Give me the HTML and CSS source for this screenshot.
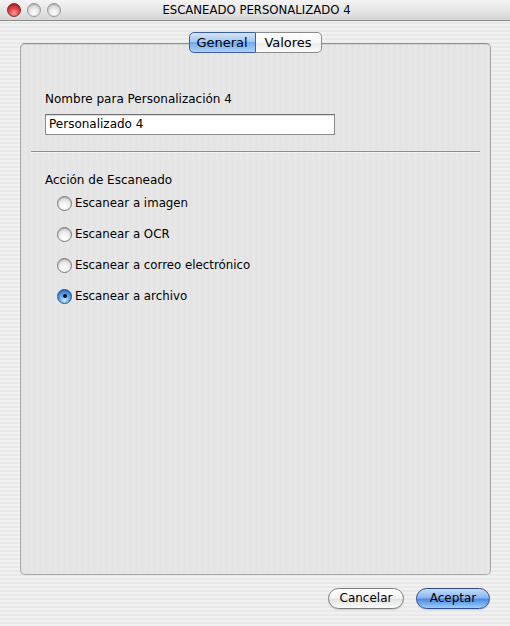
FILE: index.html
```html
<!DOCTYPE html>
<html lang="es">
<head>
<meta charset="utf-8">
<title>ESCANEADO PERSONALIZADO 4</title>
<link rel="stylesheet" href="styles.css">
</head>
<body>
<div class="window">
  <div class="titlebar">
    <div class="lights">
      <span class="light close"></span>
      <span class="light"></span>
      <span class="light"></span>
    </div>
    <div class="title">ESCANEADO PERSONALIZADO 4</div>
  </div>
  <div class="content">
    <div class="tabs">
      <span class="tab active">General</span>
      <span class="tab">Valores</span>
    </div>
    <div class="panel">
      <div class="field-label">Nombre para Personalización 4</div>
      <div class="textfield">Personalizado 4</div>
      <div class="separator"></div>
      <div class="group-label">Acción de Escaneado</div>
      <div class="radios">
        <div class="radio-row"><span class="radio"></span><span>Escanear a imagen</span></div>
        <div class="radio-row"><span class="radio"></span><span>Escanear a OCR</span></div>
        <div class="radio-row"><span class="radio"></span><span>Escanear a correo electrónico</span></div>
        <div class="radio-row"><span class="radio checked"></span><span>Escanear a archivo</span></div>
      </div>
    </div>
    <div class="buttons">
      <span class="btn">Cancelar</span>
      <span class="btn default">Aceptar</span>
    </div>
  </div>
</div>
</body>
</html>
```
FILE: styles.css
```css
html, body {
  margin: 0;
  padding: 0;
}
body {
  width: 510px;
  height: 626px;
  overflow: hidden;
  font-family: "DejaVu Sans", "Liberation Sans", sans-serif;
  font-size: 12px;
  color: #000;
}
.window {
  width: 510px;
  height: 626px;
  background: repeating-linear-gradient(to bottom, #f1f1f1 0 2px, #e9e9e9 2px 4px);
  display: flex;
  flex-direction: column;
}
.titlebar {
  height: 21px;
  box-sizing: border-box;
  border-bottom: 1px solid #8a8a8a;
  background: linear-gradient(to bottom, #f4f4f4 0%, #e6e6e6 50%, #d6d6d6 100%);
  display: flex;
  align-items: center;
}
.lights {
  display: flex;
  gap: 6px;
  padding-left: 7px;
}
.light {
  width: 14px;
  height: 14px;
  box-sizing: border-box;
  border-radius: 50%;
  border: 1px solid #9a9a9a;
  background: radial-gradient(circle at 50% 72%, #ffffff 0%, #e6e6e6 45%, #c2c2c2 100%);
  box-shadow: inset 0 1px 1px rgba(0,0,0,0.2);
}
.light.close {
  border-color: #8a2b2b;
  background: radial-gradient(circle at 50% 75%, #f7a0a0 0%, #e04545 45%, #a81818 100%);
}
.title {
  flex: 1;
  text-align: center;
  margin-right: 58px;
  font-size: 11.7px;
}
.content {
  flex: 1;
  display: flex;
  flex-direction: column;
  padding: 11px 20px 0 20px;
}
.tabs {
  display: flex;
  justify-content: center;
  position: relative;
  z-index: 1;
  width: 470px;
}
.tab {
  height: 21px;
  box-sizing: border-box;
  line-height: 19px;
  border: 1px solid #8c8c8c;
  background: linear-gradient(to bottom, #ffffff 0%, #f6f6f6 50%, #e9e9e9 51%, #fbfbfb 100%);
  font-size: 13px;
  text-align: center;
}
.tab:first-child {
  border-radius: 5px 0 0 5px;
}
.tab:last-child {
  border-radius: 0 5px 5px 0;
  border-left: none;
  width: 66px;
}
.tab.active {
  width: 67px;
  border-color: #3d5f9e;
  background: linear-gradient(to bottom, #d3e4fa 0%, #a6c8f2 45%, #76aaee 50%, #a9d2fb 100%);
}
.panel {
  margin-top: -10px;
  width: 471px;
  height: 532px;
  box-sizing: border-box;
  border: 1px solid #a6a6a6;
  border-top-color: #8e8e8e;
  border-radius: 5px;
  background: repeating-linear-gradient(to right, #e4e4e4 0 3px, #e7e7e7 3px 6px);
  box-shadow: inset 0 1px 1px rgba(0,0,0,0.08);
  padding: 47px 10px 0 10px;
  display: flex;
  flex-direction: column;
}
.field-label {
  padding-left: 14px;
  line-height: 16px;
}
.textfield {
  margin: 7px 0 0 14px;
  width: 290px;
  height: 21px;
  box-sizing: border-box;
  border: 1px solid #8d8d8d;
  border-top-color: #6f6f6f;
  background: #fff;
  box-shadow: inset 0 1px 1px rgba(0,0,0,0.15);
  line-height: 19px;
  padding-left: 3px;
}
.separator {
  margin-top: 16px;
  height: 0;
  border-top: 1px solid #8f8f8f;
  border-bottom: 1px solid #f4f4f4;
}
.group-label {
  margin-top: 19px;
  padding-left: 14px;
  line-height: 16px;
}
.radios {
  display: flex;
  flex-direction: column;
  gap: 15px;
  margin-top: 7px;
  padding-left: 26px;
}
.radio-row {
  display: flex;
  align-items: center;
  gap: 3px;
  height: 16px;
  font-size: 11.8px;
}
.radio {
  width: 15px;
  height: 15px;
  box-sizing: border-box;
  border-radius: 50%;
  border: 1px solid #7a7a7a;
  background: radial-gradient(circle at 50% 80%, #ffffff 0%, #f2f2f2 40%, #c9c9c9 100%);
  box-shadow: inset 0 1px 1px rgba(0,0,0,0.2);
  position: relative;
}
.radio.checked {
  border-color: #2b4f8f;
  background: radial-gradient(circle at 50% 78%, #c9f0ff 0%, #6aa8ef 40%, #2a66c8 100%);
}
.radio.checked::after {
  content: "";
  position: absolute;
  left: 4.5px;
  top: 4.5px;
  width: 4px;
  height: 4px;
  border-radius: 50%;
  background: #111;
}
.buttons {
  display: flex;
  justify-content: flex-end;
  gap: 12px;
  margin-top: 13px;
  width: 470px;
}
.btn {
  height: 21px;
  box-sizing: border-box;
  border-radius: 11px;
  line-height: 19px;
  text-align: center;
  border: 1px solid #7e7e7e;
  background: linear-gradient(to bottom, #ffffff 0%, #f5f5f5 45%, #e3e3e3 55%, #fbfbfb 100%);
  box-shadow: 0 1px 1px rgba(0,0,0,0.15);
  width: 76px;
  font-size: 12px;
}
.btn.default {
  width: 74px;
  border-color: #2d4d8c;
  background: linear-gradient(to bottom, #c6dcfa 0%, #8bb7f2 45%, #4f8ae4 55%, #9cd0fb 100%);
}
```
